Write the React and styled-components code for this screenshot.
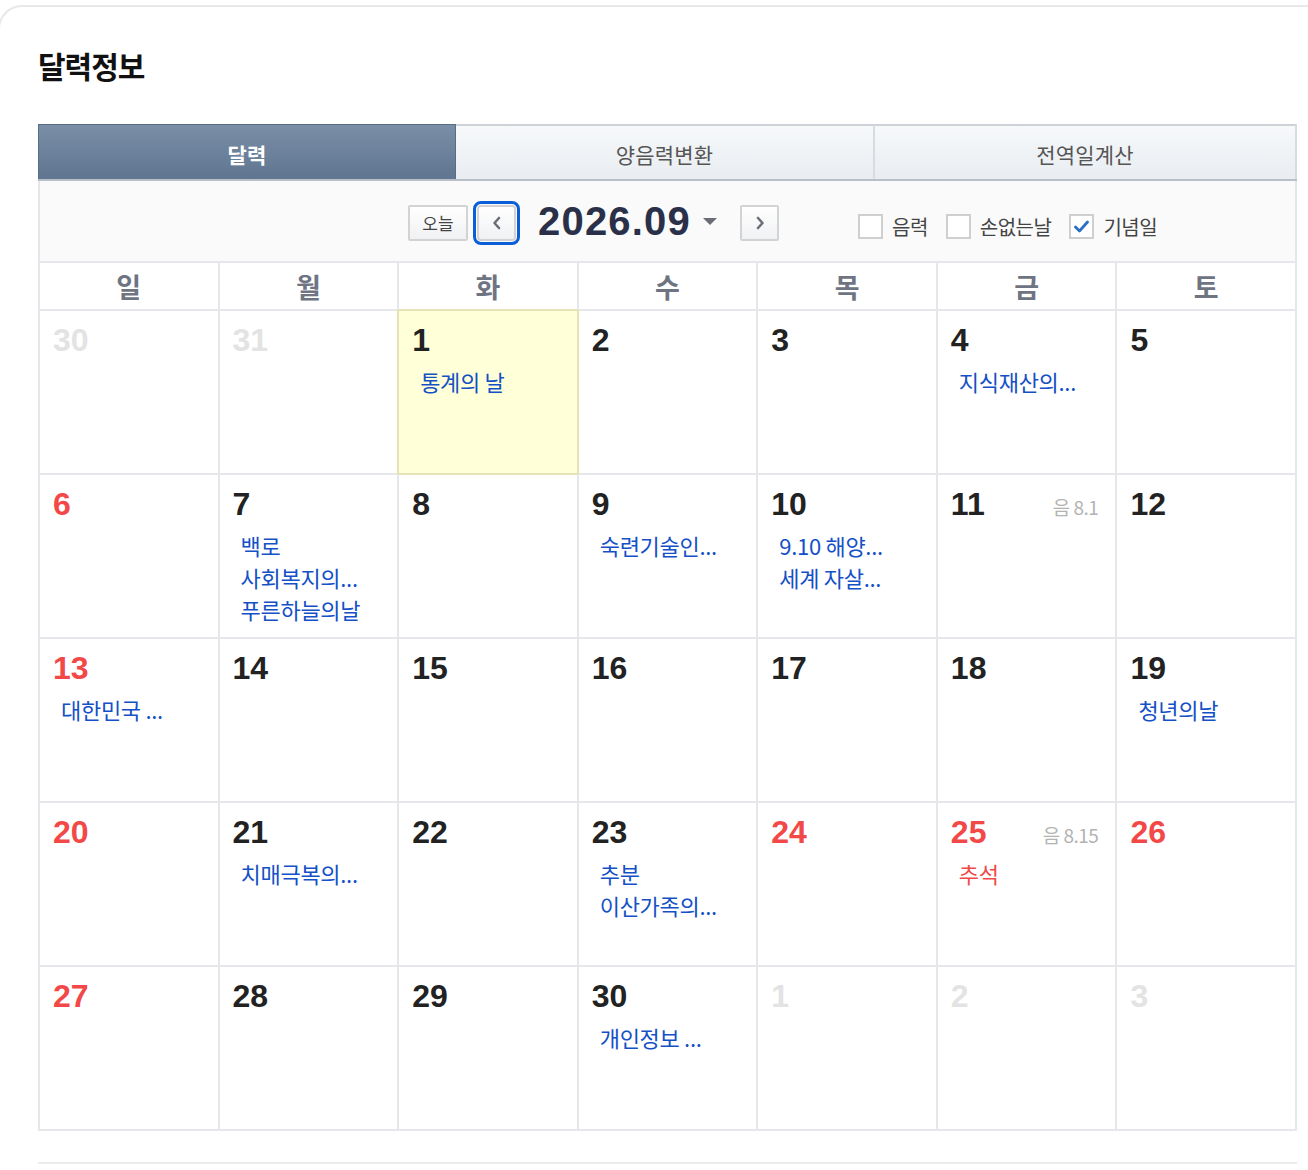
import React from 'react';
import styled, { createGlobalStyle } from 'styled-components';

const GlobalStyle = createGlobalStyle`
  html, body {
    margin: 0;
    padding: 0;
    background: #fff;
    overflow: hidden;
  }

  body {
    font-family: 'Liberation Sans', 'Noto Sans CJK KR', sans-serif;
    color: #222;
  }
`;

const KR = `'Noto Sans CJK KR', 'Liberation Sans', sans-serif`;
const NUM = `'Liberation Sans', 'Noto Sans CJK KR', sans-serif`;

const Card = styled.section`
  margin: 5px 0 0 -2px;
  width: 1360px;
  min-height: 1200px;
  border-top: 2px solid #e8e8e8;
  border-left: 2px solid #e8e8e8;
  border-top-left-radius: 24px;
  padding-left: 38px;
  box-sizing: border-box;
`;

const Title = styled.h2`
  margin: 0;
  padding-top: 41px;
  height: 117px;
  box-sizing: border-box;
  font-family: ${KR};
  font-size: 30px;
  font-weight: 700;
  letter-spacing: -1px;
  line-height: 34px;
  color: #111;
`;

const Calendar = styled.div`
  width: 1259px;
`;

const Tabs = styled.div`
  display: grid;
  grid-template-columns: 418px 419px 1fr;
  height: 57px;
  border-bottom: 2px solid #b9bfc7;
  box-sizing: border-box;
`;

const Tab = styled.div`
  display: flex;
  align-items: center;
  justify-content: center;
  padding-top: 3px;
  font-family: ${KR};
  font-size: 21px;
  letter-spacing: 0.2px;
  box-sizing: border-box;
  ${({ $active }) =>
    $active
      ? `
    background: linear-gradient(#7a8ea7, #5f7590);
    border: 1px solid #586c84;
    border-bottom: none;
    color: #fff;
    font-weight: 700;
  `
      : `
    background: linear-gradient(#f6f8fa, #e9edf1);
    border-top: 2px solid #cdd2d8;
    border-right: 2px solid #d8dce1;
    color: #555;
  `}
`;

const Toolbar = styled.div`
  display: flex;
  align-items: center;
  height: 80px;
  padding-left: 368px;
  background: #fafafa;
  border-left: 2px solid #e4e6e9;
  border-right: 2px solid #e4e6e9;
  box-sizing: border-box;
`;

const SmallButton = styled.button`
  display: flex;
  align-items: center;
  justify-content: center;
  height: 36px;
  padding: 0;
  margin: 3px 0 0;
  border: 2px solid #d3d3d3;
  border-radius: 2px;
  background: linear-gradient(#ffffff, #f0f1f3);
  font-family: ${KR};
  font-size: 17px;
  color: #444;
  box-sizing: border-box;
  cursor: pointer;
  width: ${({ $wide }) => ($wide ? '60px' : '39px')};
  ${({ $focused }) =>
    $focused &&
    `
    outline: 3px solid #0b5fd6;
    outline-offset: 1px;
    border-radius: 4px;
  `}
`;

const MonthLabel = styled.div`
  display: flex;
  align-items: center;
  margin: 0 23px 0 22px;
  font-family: ${NUM};
  font-size: 40px;
  font-weight: 700;
  color: #2b3049;
  letter-spacing: 1.2px;
`;

const Caret = styled.span`
  width: 0;
  height: 0;
  margin-left: 12px;
  border-left: 7px solid transparent;
  border-right: 7px solid transparent;
  border-top: 7px solid #6a6d75;
`;

const Options = styled.div`
  display: flex;
  align-items: center;
  margin: 10px 0 0 79px;
`;

const Check = styled.label`
  display: flex;
  align-items: center;
  margin-right: 18px;
  font-family: ${KR};
  font-size: 20px;
  color: #444;
  letter-spacing: -0.5px;
`;

const Box = styled.span`
  display: flex;
  align-items: center;
  justify-content: center;
  width: 25px;
  height: 25px;
  margin-right: 9px;
  border: 2px solid #cfcfcf;
  background: #fff;
  box-sizing: border-box;
`;

const Grid = styled.div`
  display: grid;
  grid-template-columns: repeat(7, 1fr);
  grid-template-rows: 46px repeat(5, 162px);
  gap: 2px;
  padding: 2px;
  background: #e5e7ea;
`;

const HeadCell = styled.div`
  display: flex;
  align-items: center;
  justify-content: center;
  background: #fff;
  font-family: ${KR};
  font-size: 27px;
  font-weight: 700;
  color: #6f7483;
`;

const Cell = styled.div`
  position: relative;
  padding: 10px 16px 0 13px;
  background: ${({ $today }) => ($today ? '#ffffd8' : '#fff')};
  ${({ $today }) => $today && 'outline: 2px solid #e4e2b6;'}
`;

const Num = styled.div`
  font-family: ${NUM};
  font-size: 32px;
  font-weight: 700;
  line-height: 38px;
  color: ${({ $tone }) =>
    $tone === 'red' ? '#f24848' : $tone === 'muted' ? '#e3e3e3' : '#222'};
`;

const Lunar = styled.span`
  position: absolute;
  top: 18px;
  right: 17px;
  font-family: ${KR};
  font-size: 19px;
  color: #b3b3b3;
  letter-spacing: -0.5px;
`;

const Events = styled.div`
  margin-top: 6px;
  padding-left: 8px;
`;

const Event = styled.div`
  font-family: ${KR};
  font-size: 22px;
  line-height: 32px;
  letter-spacing: -0.3px;
  white-space: nowrap;
  color: ${({ $holiday }) => ($holiday ? '#f24848' : '#1450c6')};
`;

const Footer = styled.div`
  width: 1259px;
  margin-top: 31px;
  border-top: 2px solid #ececec;
`;

const WEEK = ['일', '월', '화', '수', '목', '금', '토'];

const EVENTS = {
  1: ['통계의 날'],
  4: ['지식재산의...'],
  7: ['백로', '사회복지의...', '푸른하늘의날'],
  9: ['숙련기술인...'],
  10: ['9.10 해양...', '세계 자살...'],
  13: ['대한민국 ...'],
  19: ['청년의날'],
  21: ['치매극복의...'],
  23: ['추분', '이산가족의...'],
  25: ['추석'],
  30: ['개인정보 ...'],
};

const LUNAR = { 11: '8.1', 25: '8.15' };
const HOLIDAYS = [24, 25, 26];

// September 2026 starts on a Tuesday
const buildDays = () => {
  const days = [
    { day: 30, other: true },
    { day: 31, other: true },
  ];
  for (let d = 1; d <= 30; d += 1) days.push({ day: d });
  for (let d = 1; d <= 3; d += 1) days.push({ day: d, other: true });
  return days;
};

const CheckMark = () => (
  <svg width="15" height="13" viewBox="0 0 15 13">
    <path
      d="M1.5 7 L5.5 11 L13.5 2"
      fill="none"
      stroke="#2b6fc4"
      strokeWidth="2.8"
      strokeLinecap="round"
      strokeLinejoin="round"
    />
  </svg>
);

const Chevron = ({ dir }) => (
  <svg width="10" height="14" viewBox="0 0 10 14">
    <path
      d={dir === 'left' ? 'M7 2 L2.5 7 L7 12' : 'M3 2 L7.5 7 L3 12'}
      fill="none"
      stroke="#6b6f78"
      strokeWidth="2.6"
      strokeLinecap="round"
      strokeLinejoin="round"
    />
  </svg>
);

const App = () => {
  const days = buildDays();

  return (
    <>
      <GlobalStyle />
      <Card>
        <Title>달력정보</Title>
        <Calendar>
          <Tabs>
            <Tab $active>달력</Tab>
            <Tab>양음력변환</Tab>
            <Tab>전역일계산</Tab>
          </Tabs>
          <Toolbar>
            <SmallButton $wide>오늘</SmallButton>
            <SmallButton $focused style={{ marginLeft: 9 }}>
              <Chevron dir="left" />
            </SmallButton>
            <MonthLabel>
              2026.09
              <Caret />
            </MonthLabel>
            <SmallButton>
              <Chevron dir="right" />
            </SmallButton>
            <Options>
              <Check>
                <Box />
                음력
              </Check>
              <Check>
                <Box />
                손없는날
              </Check>
              <Check>
                <Box>
                  <CheckMark />
                </Box>
                기념일
              </Check>
            </Options>
          </Toolbar>
          <Grid>
            {WEEK.map((w) => (
              <HeadCell key={w}>{w}</HeadCell>
            ))}
            {days.map((d, i) => {
              const weekday = i % 7;
              let tone = 'normal';
              if (d.other) tone = 'muted';
              else if (weekday === 0 || HOLIDAYS.includes(d.day)) tone = 'red';
              const events = d.other ? [] : EVENTS[d.day] || [];
              const lunar = d.other ? null : LUNAR[d.day];
              return (
                <Cell key={i} $today={!d.other && d.day === 1}>
                  <Num $tone={tone}>{d.day}</Num>
                  {lunar && <Lunar>음 {lunar}</Lunar>}
                  {events.length > 0 && (
                    <Events>
                      {events.map((e) => (
                        <Event key={e} $holiday={d.day === 25}>
                          {e}
                        </Event>
                      ))}
                    </Events>
                  )}
                </Cell>
              );
            })}
          </Grid>
        </Calendar>
        <Footer />
      </Card>
    </>
  );
};

export default App;
